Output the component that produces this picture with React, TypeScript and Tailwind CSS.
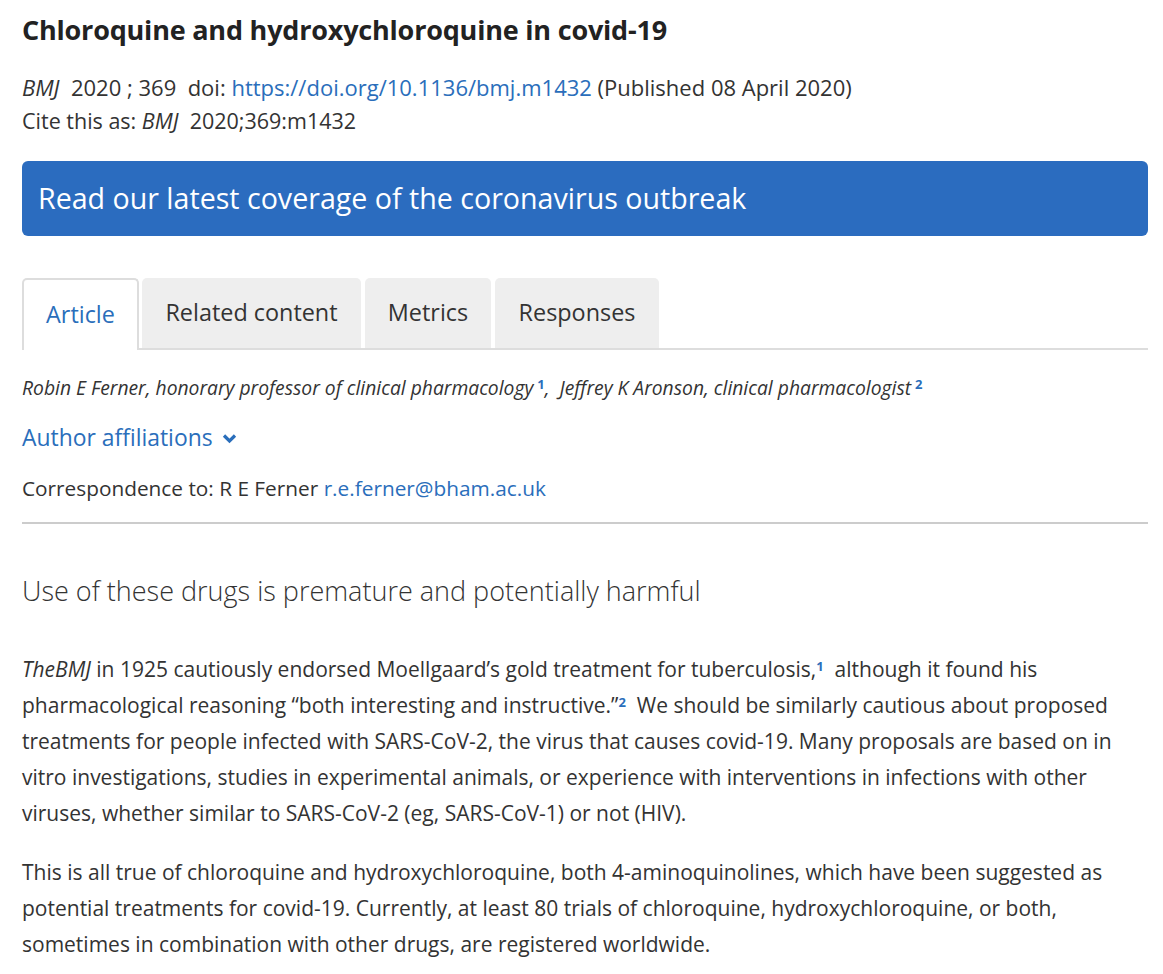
import React from "react";

const F = { fontFamily: "'Open Sans', Lato, sans-serif" };

export default function App() {
  return (
    <div className="min-h-[974px] bg-white text-[#333333]" style={F}>
      <div className="pl-[22px] pr-[15px] pt-[12px]">
        <h1 className="text-[27px] font-bold leading-[36px] tracking-[-0.2px] text-[#222222]">
          Chloroquine and hydroxychloroquine in covid-19
        </h1>
        <div className="mt-[22px] text-[21.5px] leading-[34px]">
          <div className="text-[22px]">
            <i>BMJ</i>&nbsp; 2020 ; 369&nbsp; doi:{" "}
            <a className="text-[#2a6ebb]">https://doi.org/10.1136/bmj.m1432</a> (Published 08 April 2020)
          </div>
          <div>
            Cite this as: <i>BMJ</i>&nbsp; 2020;369:m1432
          </div>
        </div>

        <div className="mt-[23px] flex h-[75px] items-center rounded-[6px] bg-[#2b6cbf] px-[16px] text-[28.6px] text-white">
          Read our latest coverage of the coronavirus outbreak
        </div>

        <div className="mt-[42px] flex items-end border-b-2 border-[#dddddd]">
          <div className="-mb-[2px] flex h-[72px] w-[117px] items-center justify-center rounded-t-[5px] border-2 border-b-0 border-[#dddddd] bg-white text-[23.4px] text-[#2a6ebb]">
            Article
          </div>
          <div className="ml-[3px] flex h-[70px] w-[219px] items-center justify-center rounded-t-[5px] bg-[#eeeeee] text-[23.4px]">
            Related content
          </div>
          <div className="ml-[4px] flex h-[70px] w-[126px] items-center justify-center rounded-t-[5px] bg-[#eeeeee] text-[23.4px]">
            Metrics
          </div>
          <div className="ml-[4px] flex h-[70px] w-[164px] items-center justify-center rounded-t-[5px] bg-[#eeeeee] text-[23.4px]">
            Responses
          </div>
        </div>

        <div className="mt-[26px] text-[19.3px] italic leading-[24px]">
          Robin E Ferner, honorary professor of clinical pharmacology
          <sup className="ml-[4px] text-[13px] font-bold not-italic text-[#2a6ebb]">1</sup>,&nbsp; Jeffrey K Aronson,
          clinical pharmacologist
          <sup className="ml-[4px] text-[13px] font-bold not-italic text-[#2a6ebb]">2</sup>
        </div>

        <div className="mt-[23px] flex items-center text-[22.9px] leading-[30px] text-[#2a6ebb]">
          Author affiliations
          <svg className="ml-[9px]" width="15" height="11" viewBox="0 0 15 11">
            <path d="M2 2.5 L7.5 8 L13 2.5" fill="none" stroke="#2a6ebb" strokeWidth="3.2" />
          </svg>
        </div>

        <div className="mt-[20px] text-[20.8px] leading-[30px]">
          Correspondence to: R E Ferner <a className="text-[#2a6ebb]">r.e.ferner@bham.ac.uk</a>
        </div>

        <div className="mt-[19px] h-[2px] bg-[#cccccc]" />

        <h2 className="mt-[49px] text-[27px] font-light leading-[36px]">
          Use of these drugs is premature and potentially harmful
        </h2>

        <p className="mt-[42px] text-[21px] leading-[36px]">
          <i>TheBMJ</i> in 1925 cautiously endorsed Moellgaard’s gold treatment for tuberculosis,
          <sup className="text-[13px] font-bold text-[#2a6ebb]">1</sup>&nbsp; although it found his
          pharmacological reasoning “both interesting and instructive.”
          <sup className="text-[13px] font-bold text-[#2a6ebb]">2</sup>&nbsp; We should be similarly cautious about
          proposed treatments for people infected with SARS-CoV-2, the virus that causes covid-19. Many proposals are
          based on in vitro investigations, studies in experimental animals, or experience with interventions in
          infections with other viruses, whether similar to SARS-CoV-2 (eg, SARS-CoV-1) or not (HIV).
        </p>

        <p className="mt-[23px] text-[21px] leading-[36px]">
          This is all true of chloroquine and hydroxychloroquine, both 4-aminoquinolines, which have been suggested as
          potential treatments for covid-19. Currently, at least 80 trials of chloroquine, hydroxychloroquine, or both,
          sometimes in combination with other drugs, are registered worldwide.
        </p>
      </div>
    </div>
  );
}
